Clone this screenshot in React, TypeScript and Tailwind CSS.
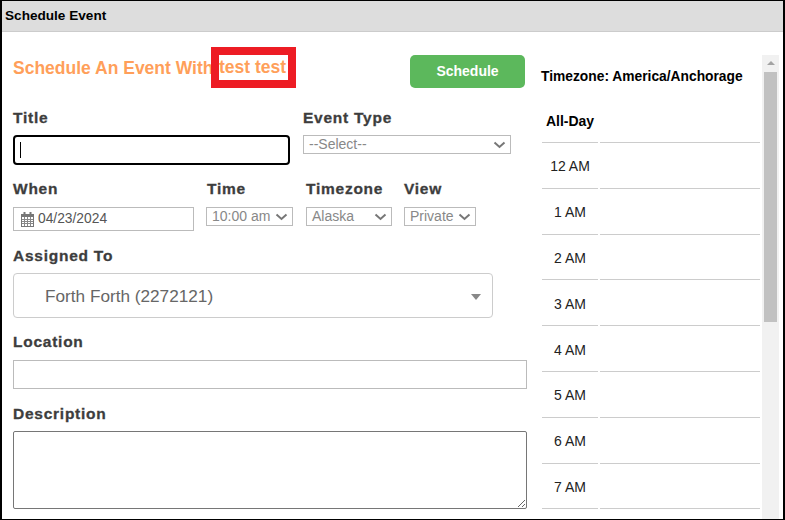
import React from 'react';

const hours = ['12 AM', '1 AM', '2 AM', '3 AM', '4 AM', '5 AM', '6 AM', '7 AM'];

const Chevron = () => (
  <svg width="13" height="8" viewBox="0 0 13 8" className="shrink-0">
    <path d="M1.5 1.5 L6.5 6 L11.5 1.5" fill="none" stroke="#777" strokeWidth="2" />
  </svg>
);

const CalendarIcon = () => (
  <svg width="13" height="15" viewBox="0 0 13 15" className="shrink-0">
    <rect x="0.5" y="2.5" width="12" height="12" fill="none" stroke="#777" />
    <rect x="0" y="2" width="13" height="3" fill="#777" />
    <rect x="2.5" y="0" width="2" height="4" fill="#777" />
    <rect x="8.5" y="0" width="2" height="4" fill="#777" />
    <path d="M3.5 5v9M6.5 5v9M9.5 5v9M1 7.5h11M1 9.5h11M1 11.5h11" stroke="#888" strokeWidth="1" />
  </svg>
);

const Label = ({ children, className = '' }: { children: React.ReactNode; className?: string }) => (
  <div className={`text-[15.5px] leading-[20px] font-bold tracking-[0.75px] text-[#3d3d3d] [-webkit-text-stroke:0.3px_#3d3d3d] ${className}`}>{children}</div>
);

const FakeSelect = ({ text, className = '' }: { text: string; className?: string }) => (
  <div className={`flex h-[19px] items-center justify-between border border-[#bbb] pl-[5px] pr-[4px] text-[14px] text-[#888] ${className}`}>
    <span>{text}</span>
    <Chevron />
  </div>
);

const App: React.FC = () => {
  return (
    <div className="h-[520px] w-[785px] overflow-hidden border-x-2 border-y border-black bg-white font-['Liberation_Sans',Arial,sans-serif]">
      <div className="flex h-[31px] items-center border-b border-[#ccc] bg-[#ddd] pl-[3px] text-[13.6px] font-bold text-black">
        Schedule Event
      </div>

      <div className="flex">
        <div className="w-[527px] shrink-0 pl-[11px]">
          <div className="flex h-[72px]">
            <div className="relative w-[397px] pt-[26px] text-[17.5px] leading-[21px] font-bold whitespace-nowrap text-[#ff9f5a]">
              Schedule An Event With
              <span className="absolute top-[15px] left-[198px] h-[41px] w-[85px] border-[8px] border-[#ed1c24] leading-[25px]">test test</span>
            </div>
            <div className="mt-[23px] flex h-[33px] w-[115px] items-center justify-center rounded-[5px] bg-[#5cb85c] text-[14px] font-bold text-white">
              Schedule
            </div>
          </div>

          <div className="flex">
            <div className="w-[290px]">
              <Label className="mt-[4px] h-[27px]">Title</Label>
              <div className="flex h-[30px] w-[277px] items-center rounded-[4px] border-2 border-black pl-[5px]">
                <div className="h-[16px] w-px bg-black" />
              </div>
            </div>
            <div className="w-[208px]">
              <Label className="mt-[4px] h-[27px]">Event Type</Label>
              <FakeSelect text="--Select--" />
            </div>
          </div>

          <div className="mt-[14px] flex">
            <div className="w-[193px]">
              <Label className="h-[28px]">When</Label>
              <div className="flex h-[24px] w-[181px] items-center gap-[4px] border border-[#bbb] pl-[7px] text-[13.8px] text-[#555]">
                <CalendarIcon />
                04/23/2024
              </div>
            </div>
            <div className="w-[100px]">
              <Label className="h-[28px] pl-px">Time</Label>
              <FakeSelect text="10:00 am" className="w-[87px]" />
            </div>
            <div className="w-[98px]">
              <Label className="h-[28px]">Timezone</Label>
              <FakeSelect text="Alaska" className="w-[86px]" />
            </div>
            <div className="w-[72px]">
              <Label className="h-[28px]">View</Label>
              <FakeSelect text="Private" />
            </div>
          </div>

          <Label className="mt-[15px] h-[27px]">Assigned To</Label>
          <div className="flex h-[45px] w-[480px] items-center justify-between rounded-[4px] border border-[#ccc] pt-[2px] pr-[11px] pl-[31px] text-[17.2px] text-[#666]">
            <span>Forth Forth (2272121)</span>
            <span className="border-x-[5px] border-t-[6px] border-x-transparent border-t-[#888]" />
          </div>

          <Label className="mt-[14px] h-[28px]">Location</Label>
          <div className="h-[29px] w-[514px] border border-[#bbb]" />

          <Label className="mt-[15px] h-[27px]">Description</Label>
          <textarea className="block h-[78px] w-[514px] rounded-[2px] border border-[#767676]" />
        </div>

        <div className="w-[233px] shrink-0 pt-[37px] pl-[12px]">
          <div className="text-[13.8px] leading-[15px] font-bold whitespace-nowrap text-black">Timezone: America/Anchorage</div>
          <div className="mt-[18px] flex h-[40px] pl-px">
            <div className="flex w-[56px] items-start justify-center pt-[9px] text-[14px] font-bold text-black">All-Day</div>
          </div>
          <div className="flex h-px gap-[2px] pl-px">
            <div className="w-[56px] bg-[#ccc]" />
            <div className="w-[160px] bg-[#ccc]" />
          </div>
          {hours.map((h) => (
            <div key={h} className="flex h-[45.8px] gap-[2px] pl-px">
              <div className="flex w-[56px] items-center justify-center border-b border-[#ccc] pt-[3px] text-[14px] text-[#222]">{h}</div>
              <div className="w-[160px] border-b border-[#ccc]" />
            </div>
          ))}
        </div>

        <div className="mt-[23px] flex h-[470px] w-[17px] shrink-0 flex-col items-center bg-[#f1f1f1]">
          <div className="mt-[6px] border-x-[4px] border-b-[4px] border-x-transparent border-b-[#a3a3a3]" />
          <div className="mt-[7px] h-[250px] w-[13px] bg-[#c1c1c1]" />
        </div>
      </div>
    </div>
  );
};

export default App;
